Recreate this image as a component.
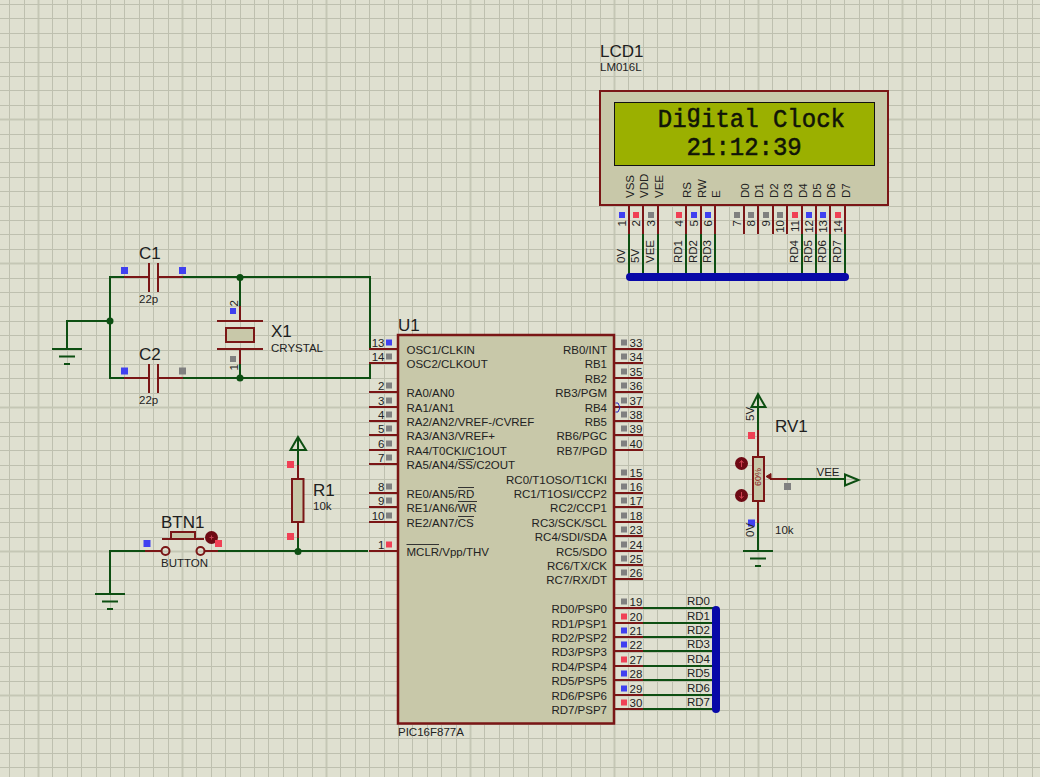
import React from "react";

const GREEN = "#0d4f12";
const RED = "#7a1616";
const BODY = "#c8c8a9";
const BLUE_SQ = "#4040f0";
const RED_SQ = "#f04055";
const GRAY_SQ = "#808080";
const b = BLUE_SQ, r = RED_SQ, g = GRAY_SQ;

type Pt = [number, number];

function Wire({ pts, c = GREEN, w = 2 }: { pts: Pt[]; c?: string; w?: number }) {
  return <polyline points={pts.map((p) => p.join(",")).join(" ")} fill="none" stroke={c} strokeWidth={w} />;
}
function Red({ pts }: { pts: Pt[] }) {
  return <Wire pts={pts} c={RED} />;
}
function Sq({ x, y, c, s = 6 }: { x: number; y: number; c: string; s?: number }) {
  return <rect x={x - s / 2} y={y - s / 2} width={s} height={s} fill={c} />;
}
function Dot({ x, y }: { x: number; y: number }) {
  return <circle cx={x} cy={y} r={3.5} fill={GREEN} />;
}
function Big({ x, y, children }: { x: number; y: number; children: React.ReactNode }) {
  return (
    <text x={x} y={y} className="text-[17px] fill-[#202020]">
      {children}
    </text>
  );
}
function Small({ x, y, end, children }: { x: number; y: number; end?: boolean; children: React.ReactNode }) {
  return (
    <text x={x} y={y} textAnchor={end ? "end" : "start"} className="text-[11.5px] fill-[#222222]">
      {children}
    </text>
  );
}
function Rot({ x, y, end, children }: { x: number; y: number; end?: boolean; children: React.ReactNode }) {
  return (
    <text
      x={x}
      y={y}
      transform={`rotate(-90 ${x} ${y})`}
      textAnchor={end ? "end" : "start"}
      className="text-[11.5px] fill-[#222222]"
    >
      {children}
    </text>
  );
}
function Gnd({ x, y }: { x: number; y: number }) {
  return (
    <g stroke={GREEN} strokeWidth={2}>
      <line x1={x - 15} x2={x + 15} y1={y} y2={y} />
      <line x1={x - 8} x2={x + 8} y1={y + 7.5} y2={y + 7.5} />
      <line x1={x - 3} x2={x + 3} y1={y + 15} y2={y + 15} />
    </g>
  );
}

function Grid() {
  const xs = Array.from({ length: 73 }, (_, i) => i);
  const ys = Array.from({ length: 55 }, (_, i) => i);
  return (
    <g>
      {xs.map((i) => {
        const x = Math.round(9.2 + i * 14.4);
        const major = (i - 2) % 10 === 0;
        return (
          <line key={i} x1={x + 0.5} x2={x + 0.5} y1={0} y2={777} stroke={major ? "#c5c7b5" : "#bec0af"} strokeWidth={major ? 2 : 1} />
        );
      })}
      {ys.map((i) => {
        const y = Math.round(4 + i * 14.4);
        const major = (i - 8) % 10 === 0;
        return (
          <line key={i} x1={0} x2={1040} y1={y + 0.5} y2={y + 0.5} stroke={major ? "#c5c7b5" : "#bec0af"} strokeWidth={major ? 2 : 1} />
        );
      })}
    </g>
  );
}

const lcdPins: { n: string; x: number; name: string; c: string; net?: string }[] = [
  { n: "1", x: 629, name: "VSS", c: b, net: "0V" },
  { n: "2", x: 643, name: "VDD", c: r, net: "5V" },
  { n: "3", x: 658, name: "VEE", c: g, net: "VEE" },
  { n: "4", x: 686, name: "RS", c: r, net: "RD1" },
  { n: "5", x: 701, name: "RW", c: b, net: "RD2" },
  { n: "6", x: 715, name: "E", c: b, net: "RD3" },
  { n: "7", x: 744, name: "D0", c: g },
  { n: "8", x: 758, name: "D1", c: g },
  { n: "9", x: 773, name: "D2", c: g },
  { n: "10", x: 787, name: "D3", c: g },
  { n: "11", x: 802, name: "D4", c: r, net: "RD4" },
  { n: "12", x: 816, name: "D5", c: b, net: "RD5" },
  { n: "13", x: 830, name: "D6", c: b, net: "RD6" },
  { n: "14", x: 845, name: "D7", c: r, net: "RD7" },
];

function Lcd() {
  return (
    <g>
      <Big x={600} y={57}>LCD1</Big>
      <Small x={600} y={71}>LM016L</Small>
      <rect x={600} y={91} width={288} height={114} fill={BODY} stroke={RED} strokeWidth={2} />
      <rect x={614.5} y={102.5} width={260} height={63} fill="#9bb000" stroke="#111" strokeWidth={1} />
      <text
        transform="translate(629 127) scale(1 1.08)"
        className="text-[24px] fill-[#101408] stroke-[#101408] stroke-[0.5px] font-['Liberation_Mono'] whitespace-pre"
      >
        {"  Di"}
        <tspan dy={-5}>g</tspan>
        <tspan dy={5}>{"ital Clock"}</tspan>
      </text>
      <text
        transform="translate(629 155) scale(1 1.08)"
        className="text-[24px] fill-[#101408] stroke-[#101408] stroke-[0.5px] font-['Liberation_Mono'] whitespace-pre"
      >
        {"    21:12:39"}
      </text>
      {lcdPins.map((p) => (
        <g key={p.n}>
          <Rot x={p.x + 4.5} y={198}>{p.name}</Rot>
          <Red pts={[[p.x, 205], [p.x, 234]]} />
          {p.net && <Wire pts={[[p.x, 234], [p.x, 277]]} />}
          <Sq x={p.x - 7} y={215} c={p.c} />
          <Rot x={p.x - 3} y={220} end>{p.n}</Rot>
          {p.net && <Rot x={p.x - 4} y={263}>{p.net}</Rot>}
        </g>
      ))}
      <Wire pts={[[630, 277], [845, 277]]} c="#0808a8" w={8} />
      <circle cx={630} cy={277} r={4} fill="#0808a8" />
      <circle cx={845} cy={277} r={4} fill="#0808a8" />
    </g>
  );
}

function Caps() {
  return (
    <g>
      <Wire pts={[[124, 277], [110, 277], [110, 378], [124, 378]]} />
      <Wire pts={[[182, 277], [370, 277], [370, 349]]} />
      <Wire pts={[[182, 378], [370, 378], [370, 363]]} />
      <Wire pts={[[110, 321], [67, 321], [67, 348]]} />
      <Gnd x={67} y={349} />
      <Dot x={110} y={321} />
      <Dot x={240} y={277.5} />
      <Dot x={240} y={378} />
      {[277, 378].map((y) => (
        <g key={y}>
          <Red pts={[[124, y], [149, y]]} />
          <Red pts={[[158, y], [183, y]]} />
          <Red pts={[[149, y - 14], [149, y + 15]]} />
          <Red pts={[[158, y - 14], [158, y + 15]]} />
        </g>
      ))}
      <Sq x={124.5} y={270.5} c={b} s={7} />
      <Sq x={182.5} y={270.5} c={b} s={7} />
      <Sq x={124.5} y={371} c={b} s={7} />
      <Sq x={182.5} y={371} c={g} s={7} />
      <Big x={139} y={259}>C1</Big>
      <Small x={139} y={303}>22p</Small>
      <Big x={139} y={360}>C2</Big>
      <Small x={139} y={404}>22p</Small>

      <Wire pts={[[240, 277], [240, 306]]} />
      <Red pts={[[240, 306], [240, 321]]} />
      <Red pts={[[240, 349], [240, 364]]} />
      <Wire pts={[[240, 364], [240, 378]]} />
      <Red pts={[[217, 321], [263, 321]]} />
      <Red pts={[[217, 349], [263, 349]]} />
      <rect x={226} y={328} width={28} height={14} fill={BODY} stroke={RED} strokeWidth={2} />
      <Sq x={233} y={311} c={b} />
      <Sq x={233} y={359} c={g} />
      <Rot x={238} y={300} end>2</Rot>
      <Rot x={238} y={364} end>1</Rot>
      <Big x={271} y={337}>X1</Big>
      <Small x={271} y={352}>CRYSTAL</Small>
    </g>
  );
}

function Button() {
  return (
    <g>
      <Wire pts={[[145, 551], [110, 551], [110, 594]]} />
      <Gnd x={110} y={594} />
      <Wire pts={[[218, 551], [368, 551]]} />
      <Red pts={[[145, 551], [161, 551]]} />
      <Red pts={[[204, 551], [218, 551]]} />
      <circle cx={165.5} cy={551} r={4} fill="none" stroke={RED} strokeWidth={2} />
      <circle cx={200.5} cy={551} r={4} fill="none" stroke={RED} strokeWidth={2} />
      <Red pts={[[162, 539], [204, 539]]} />
      <rect x={171} y={532} width={24} height={7} fill={BODY} stroke={RED} strokeWidth={2} />
      <circle cx={211.5} cy={537.5} r={6.5} fill="#6e0a14" />
      <path d="M209.5 537.5h4M211.5 535.5v4" stroke="#c04050" strokeWidth={1} />
      <Sq x={147} y={543.5} c={b} s={7} />
      <Sq x={218.5} y={543.5} c={r} s={7} />
      <Big x={161} y={528}>BTN1</Big>
      <Small x={161} y={567}>BUTTON</Small>

      <path d="M298 437 L306 450 L290.5 450 Z" fill="none" stroke={GREEN} strokeWidth={2} />
      <Wire pts={[[298, 437], [298, 465]]} />
      <Red pts={[[298, 465], [298, 479]]} />
      <rect x={292} y={479} width={11.5} height={43} fill={BODY} stroke={RED} strokeWidth={2} />
      <Red pts={[[298, 522], [298, 538]]} />
      <Wire pts={[[298, 538], [298, 551]]} />
      <Dot x={298} y={551.5} />
      <Sq x={290.5} y={464.5} c={r} s={7} />
      <Sq x={290.5} y={536.5} c={r} s={7} />
      <Big x={313} y={496}>R1</Big>
      <Small x={313} y={510}>10k</Small>
    </g>
  );
}

const pinY = (k: number) => Math.round(349 + k * 14.4);

const leftPins: { n: string; k: number; c: string; name: string }[] = [
  { n: "13", k: 0, c: b, name: "OSC1/CLKIN" },
  { n: "14", k: 1, c: g, name: "OSC2/CLKOUT" },
  { n: "2", k: 3, c: g, name: "RA0/AN0" },
  { n: "3", k: 4, c: g, name: "RA1/AN1" },
  { n: "4", k: 5, c: g, name: "RA2/AN2/VREF-/CVREF" },
  { n: "5", k: 6, c: g, name: "RA3/AN3/VREF+" },
  { n: "6", k: 7, c: g, name: "RA4/T0CKI/C1OUT" },
  { n: "7", k: 8, c: g, name: "RA5/AN4/SS/C2OUT" },
  { n: "8", k: 10, c: g, name: "RE0/AN5/RD" },
  { n: "9", k: 11, c: g, name: "RE1/AN6/WR" },
  { n: "10", k: 12, c: g, name: "RE2/AN7/CS" },
  { n: "1", k: 14, c: r, name: "MCLR/Vpp/THV" },
];

const rightPins: { n: string; k: number; c: string; name: string }[] = [
  { n: "33", k: 0, c: g, name: "RB0/INT" },
  { n: "34", k: 1, c: g, name: "RB1" },
  { n: "35", k: 2, c: g, name: "RB2" },
  { n: "36", k: 3, c: g, name: "RB3/PGM" },
  { n: "37", k: 4, c: g, name: "RB4" },
  { n: "38", k: 5, c: g, name: "RB5" },
  { n: "39", k: 6, c: g, name: "RB6/PGC" },
  { n: "40", k: 7, c: g, name: "RB7/PGD" },
  { n: "15", k: 9, c: g, name: "RC0/T1OSO/T1CKI" },
  { n: "16", k: 10, c: g, name: "RC1/T1OSI/CCP2" },
  { n: "17", k: 11, c: g, name: "RC2/CCP1" },
  { n: "18", k: 12, c: g, name: "RC3/SCK/SCL" },
  { n: "23", k: 13, c: g, name: "RC4/SDI/SDA" },
  { n: "24", k: 14, c: g, name: "RC5/SDO" },
  { n: "25", k: 15, c: g, name: "RC6/TX/CK" },
  { n: "26", k: 16, c: g, name: "RC7/RX/DT" },
  { n: "19", k: 18, c: g, name: "RD0/PSP0" },
  { n: "20", k: 19, c: r, name: "RD1/PSP1" },
  { n: "21", k: 20, c: b, name: "RD2/PSP2" },
  { n: "22", k: 21, c: b, name: "RD3/PSP3" },
  { n: "27", k: 22, c: r, name: "RD4/PSP4" },
  { n: "28", k: 23, c: b, name: "RD5/PSP5" },
  { n: "29", k: 24, c: b, name: "RD6/PSP6" },
  { n: "30", k: 25, c: r, name: "RD7/PSP7" },
];

function Chip() {
  return (
    <g>
      <Big x={398} y={331}>U1</Big>
      <rect x={398} y={335} width={216} height={388.5} fill={BODY} stroke={RED} strokeWidth={2.5} />
      <Small x={398} y={736}>PIC16F877A</Small>
      {leftPins.map((p) => {
        const y = pinY(p.k);
        return (
          <g key={p.n}>
            <Red pts={[[369, y], [398, y]]} />
            <Sq x={389} y={y - 6.5} c={p.c} />
            <Small x={384.5} y={y - 2.5} end>{p.n}</Small>
            <Small x={406.5} y={y + 5}>{p.name}</Small>
          </g>
        );
      })}
      <g stroke="#333" strokeWidth={1}>
        <line x1={458} x2={474} y1={459.5} y2={459.5} />
        <line x1={458} x2={474} y1={487.5} y2={487.5} />
        <line x1={458} x2={477} y1={501.5} y2={501.5} />
        <line x1={458} x2={474} y1={516.5} y2={516.5} />
        <line x1={406.5} x2={439} y1={544.5} y2={544.5} />
      </g>
      {rightPins.map((p) => {
        const y = pinY(p.k);
        return (
          <g key={p.n}>
            <Red pts={[[614, y], [643, y]]} />
            {p.k >= 18 && <Wire pts={[[643, y], [716, y]]} />}
            <Sq x={624} y={y - 6.5} c={p.c} />
            <Small x={629.5} y={y - 2.5}>{p.n}</Small>
            <Small x={607} y={y + 5} end>{p.name}</Small>
            {p.k >= 18 && <Small x={687} y={y - 3.5}>{`RD${p.k - 18}`}</Small>}
          </g>
        );
      })}
      <path d="M615.5 403 L618 403 L620 407.5 L618 412 L615.5 412" fill="none" stroke="#2424b8" strokeWidth={1} />
      <line x1={716} x2={716} y1={610} y2={709} stroke="#0808a8" strokeWidth={8} strokeLinecap="round" />
    </g>
  );
}

function Pot() {
  return (
    <g>
      <path d="M758 394 L765.5 407 L751.5 407 Z" fill="none" stroke={GREEN} strokeWidth={2} />
      <Wire pts={[[758, 394], [758, 430]]} />
      <Red pts={[[758, 430], [758, 457]]} />
      <rect x={753} y={457} width={11} height={44} fill={BODY} stroke={RED} strokeWidth={2} />
      <text
        x={761}
        y={486}
        transform="rotate(-90 761 486)"
        className="text-[9px] fill-[#8a1c1c]"
      >
        60%
      </text>
      <Red pts={[[758, 501], [758, 523]]} />
      <Wire pts={[[758, 523], [758, 551]]} />
      <Gnd x={758} y={551} />
      <Sq x={751.5} y={435.5} c={r} s={7} />
      <Sq x={751.5} y={523} c={b} s={7} />
      <Rot x={754} y={421}>5V</Rot>
      <Rot x={754} y={537}>0V</Rot>
      <circle cx={741.5} cy={463.5} r={6.5} fill="#6e0a14" />
      <path d="M741.5 467v-6M739.5 463l2-2.5l2 2.5" fill="none" stroke="#d04050" strokeWidth={1} />
      <circle cx={741.5} cy={495.5} r={6.5} fill="#6e0a14" />
      <path d="M741.5 492v6M739.5 496l2 2.5l2-2.5" fill="none" stroke="#d04050" strokeWidth={1} />
      <Red pts={[[770, 479], [787, 479]]} />
      <path d="M766 476.5 L771 473.5 L771 479.5 Z" fill={RED} stroke={RED} strokeWidth={1} />
      <Wire pts={[[787, 479], [844, 479]]} />
      <path d="M845 474.5 L858.5 480 L845 485.5 Z" fill="none" stroke={GREEN} strokeWidth={2} />
      <Sq x={787.5} y={486.5} c={g} s={7} />
      <Small x={816.5} y={476}>VEE</Small>
      <Big x={775} y={432}>RV1</Big>
      <Small x={775} y={534}>10k</Small>
    </g>
  );
}

export default function App() {
  return (
    <div className="relative w-[1040px] h-[777px] overflow-hidden bg-[#dfe0d0] font-['Liberation_Sans',Arial,sans-serif]">
      <svg width={1040} height={777} viewBox="0 0 1040 777" className="block">
        <Grid />
        <Lcd />
        <Caps />
        <Button />
        <Chip />
        <Pot />
      </svg>
    </div>
  );
}
